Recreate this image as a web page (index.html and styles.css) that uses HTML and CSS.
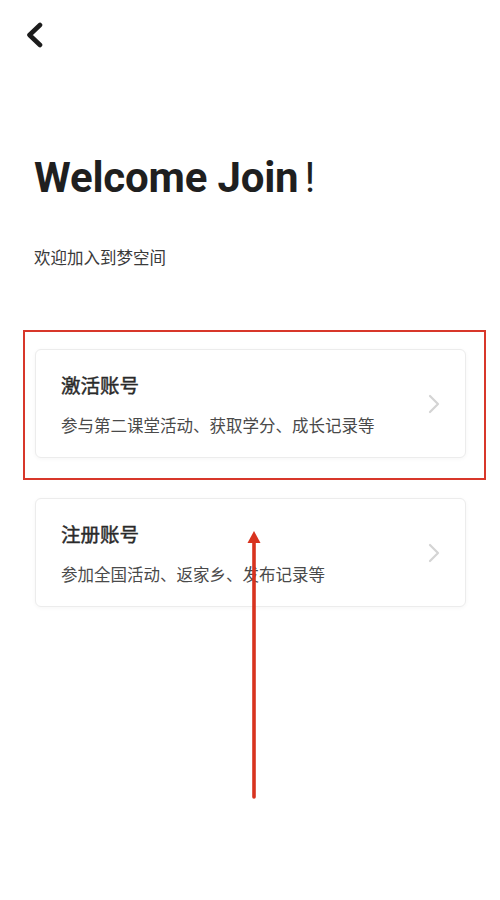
FILE: index.html
```html
<!DOCTYPE html>
<html lang="zh-CN">
<head>
<meta charset="utf-8">
<title>Welcome Join</title>
<link rel="stylesheet" href="styles.css">
</head>
<body>
<div class="page">
  <header class="topbar">
    <button class="back" aria-label="返回">
      <svg width="18" height="26" viewBox="0 0 18 26"><path d="M15 3 L4.5 13 L15 23" fill="none" stroke="#1c1c1c" stroke-width="4.6" stroke-linecap="round" stroke-linejoin="round"/></svg>
    </button>
  </header>

  <section class="intro">
    <h1 class="title">Welcome Join<span class="excl">!</span></h1>
    <p class="subtitle">欢迎加入到梦空间</p>
  </section>

  <section class="options">
    <div class="highlight">
      <div class="card">
        <div class="card-text">
          <div class="card-title">激活账号</div>
          <div class="card-desc">参与第二课堂活动、获取学分、成长记录等</div>
        </div>
        <svg class="chev" width="14" height="20" viewBox="0 0 14 20"><path d="M3 2 L11 10 L3 18" fill="none" stroke="#d4d4d4" stroke-width="2.2" stroke-linecap="round" stroke-linejoin="round"/></svg>
      </div>
    </div>
    <div class="card card-second">
      <div class="card-text">
        <div class="card-title">注册账号</div>
        <div class="card-desc">参加全国活动、返家乡、发布记录等</div>
      </div>
      <svg class="chev" width="14" height="20" viewBox="0 0 14 20"><path d="M3 2 L11 10 L3 18" fill="none" stroke="#d4d4d4" stroke-width="2.2" stroke-linecap="round" stroke-linejoin="round"/></svg>
    </div>
  </section>

  <svg class="annot-arrow" width="16" height="268" viewBox="0 0 16 268">
    <line x1="8" y1="10" x2="8" y2="266" stroke="#d8331f" stroke-width="3.6" stroke-linecap="round"/>
    <path d="M8 0 L14.5 12 L1.5 12 Z" fill="#d8331f"/>
  </svg>
</div>
</body>
</html>
```
FILE: styles.css
```css
* { box-sizing: border-box; }

html, body {
  margin: 0;
  padding: 0;
  background: #ffffff;
}

body {
  font-family: "Noto Sans CJK SC", "Noto Sans", sans-serif;
  color: #222;
}

.page {
  position: relative;
  width: 500px;
  min-height: 900px;
  padding: 0 34px 0 35px;
}

.topbar {
  height: 110px;
  padding-top: 22px;
  margin-left: -10px;
}

.back {
  display: block;
  border: 0;
  background: transparent;
  padding: 0;
  width: 18px;
  height: 26px;
  cursor: pointer;
}

.back svg { display: block; }

.intro {
  padding-top: 47px;
}

.title {
  margin: 0 0 0 -1px;
  font-family: Roboto, "Liberation Sans", sans-serif;
  font-weight: 700;
  font-size: 42px;
  line-height: 42px;
  color: #1f1f1f;
  letter-spacing: -0.2px;
}

.excl {
  font-weight: 400;
  margin-left: 6px;
}

.subtitle {
  margin: 50px 0 0 -1px;
  font-size: 16.5px;
  line-height: 16px;
  color: #3a3a3a;
}

.options {
  margin-top: 65px;
}

.highlight {
  margin: 0 -20px 0 -12px;
  border: 2px solid #d8372a;
  padding: 17px 18px 20px 10px;
}

.card {
  display: flex;
  align-items: center;
  justify-content: space-between;
  border: 1px solid #ececec;
  border-radius: 6px;
  background: #fff;
  box-shadow: 0 1px 4px rgba(0, 0, 0, 0.04);
  padding: 25px 24px 24px 25px;
}

.card-second {
  margin-top: 18px;
}

.card-title {
  font-size: 19.5px;
  line-height: 19px;
  font-weight: 400;
  -webkit-text-stroke: 0.45px #2a2a2a;
  color: #2a2a2a;
}

.card-desc {
  margin-top: 23px;
  font-size: 16.5px;
  line-height: 16px;
  color: #4a4a4a;
}

.chev {
  display: block;
  flex: none;
}

.annot-arrow {
  position: absolute;
  left: 246px;
  top: 531px;
  display: block;
}
```
